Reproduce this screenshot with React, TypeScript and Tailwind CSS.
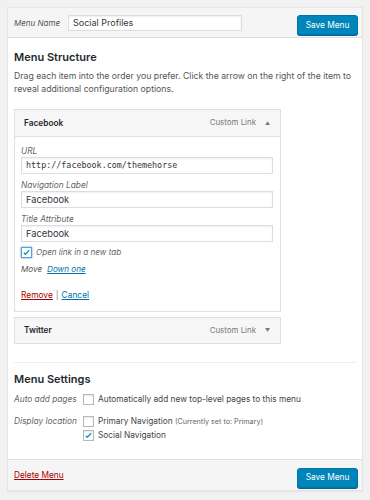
import React from "react";

const font = { fontFamily: "Inter, 'Noto Sans', sans-serif" };

function Check({ checked, focus }: { checked?: boolean; focus?: boolean }) {
  return (
    <span
      className={`inline-flex h-[11px] w-[11px] shrink-0 items-center justify-center border bg-white ${
        focus ? "border-[#5b9dd9] shadow-[0_0_2px_rgba(30,140,190,0.8)]" : "border-[#b4b9be] shadow-[inset_0_1px_2px_rgba(0,0,0,0.1)]"
      }`}
    >
      {checked && (
        <svg viewBox="0 0 20 20" className="h-[9px] w-[9px]">
          <path d="M4 10.5l3.5 3.5L16 5" fill="none" stroke="#1e8cbe" strokeWidth="2.8" />
        </svg>
      )}
    </span>
  );
}

function SaveButton() {
  return (
    <button className="h-[20px] w-[61px] rounded-[3px] border border-[#0073aa] bg-[#0085ba] text-[8.3px] text-white shadow-[0_1px_0_#006799]">
      Save Menu
    </button>
  );
}

function Field({ label, value, mono }: { label: string; value: string; mono?: boolean }) {
  return (
    <div className="flex flex-col">
      <div className="h-[12px] text-[8.3px] italic leading-[12px] text-[#666]">{label}</div>
      <div
        className={`flex h-[17px] items-center border border-[#ddd] bg-white px-[4px] text-[#32373c] shadow-[inset_0_1px_2px_rgba(0,0,0,0.07)] ${
          mono ? "text-[8.4px]" : "text-[9.3px]"
        }`}
        style={mono ? { fontFamily: "'DejaVu Sans Mono', monospace" } : undefined}
      >
        {value}
      </div>
    </div>
  );
}

function ItemHead({ title, up }: { title: string; up?: boolean }) {
  return (
    <>
      <span className="text-[8.3px] font-semibold text-[#23282d]">{title}</span>
      <span className="ml-auto text-[7.9px] text-[#72777c]">Custom Link</span>
      <span className="ml-[9px] w-[6px] text-[5px] leading-none text-[#72777c]">{up ? "▲" : "▼"}</span>
    </>
  );
}

export default function App() {
  return (
    <div className="min-h-[500px] w-[370px] bg-[#f1f1f1] px-[7px] pt-[7px]" style={font}>
      <div className="border border-[#e5e5e5] bg-white shadow-[0_1px_1px_rgba(0,0,0,0.04)]">
        {/* header */}
        <div className="flex h-[30px] items-center border-b border-[#dfdfdf] bg-[#f5f5f5] pl-[6px] pr-[4px]">
          <span className="w-[46px] whitespace-nowrap text-[8px] italic text-[#555]">Menu Name</span>
          <div className="ml-[8px] flex h-[16px] w-[174px] items-center border border-[#ddd] bg-white px-[4px] text-[9px] text-[#32373c] shadow-[inset_0_1px_2px_rgba(0,0,0,0.07)]">
            Social Profiles
          </div>
          <div className="ml-auto">
            <SaveButton />
          </div>
        </div>

        {/* body */}
        <div className="px-[6px] pt-[12px]">
          <h3 className="text-[11px] font-semibold leading-[14px] text-[#23282d]">Menu Structure</h3>
          <p className="mt-[6px] text-[8.7px] leading-[13px] text-[#555]">
            Drag each item into the order you prefer. Click the arrow on the right of the item to reveal additional configuration options.
          </p>

          {/* Facebook item */}
          <div className="mt-[13px] w-[267px] border border-[#dfdfdf] bg-white">
            <div className="flex h-[27px] items-center border-b border-[#dfdfdf] bg-[#f7f7f7] pl-[9px] pr-[9px]">
              <ItemHead title="Facebook" up />
            </div>
            <div className="pl-[6px] pr-[7px] pt-[8px] pb-[10px]">
              <div className="flex flex-col gap-[5px]">
                <Field label="URL" value="http://facebook.com/themehorse" mono />
                <Field label="Navigation Label" value="Facebook" />
                <Field label="Title Attribute" value="Facebook" />
              </div>
              <div className="mt-[4px] flex h-[12px] items-center gap-[4px]">
                <Check checked focus />
                <span className="text-[8.1px] italic text-[#666]">Open link in a new tab</span>
              </div>
              <div className="mt-[5px] flex h-[12px] items-center gap-[5px] text-[8.1px]">
                <span className="italic text-[#555]">Move</span>
                <span className="italic text-[#0073aa] underline">Down one</span>
              </div>
              <div className="mt-[14px] flex h-[12px] items-center text-[8.4px] text-[#555]">
                <span className="text-[#a00] underline">Remove</span>
                <span className="mx-[3px] text-[#82878c]">|</span>
                <span className="text-[#0073aa] underline">Cancel</span>
              </div>
            </div>
          </div>

          {/* Twitter item */}
          <div className="mt-[5px] flex h-[27px] w-[267px] items-center border border-[#dfdfdf] bg-[#f7f7f7] pl-[9px] pr-[9px]">
            <ItemHead title="Twitter" />
          </div>

          <div className="mt-[18px] border-t border-[#eeeeee]" />

          <h3 className="mt-[9px] text-[11px] font-semibold leading-[14px] text-[#23282d]">Menu Settings</h3>

          <div className="mt-[7px] grid grid-cols-[69px_1fr] gap-y-[9px] text-[8.3px]">
            <span className="flex h-[13px] items-center italic text-[#666]">Auto add pages</span>
            <div className="flex h-[13px] items-center gap-[4px]">
              <Check />
              <span className="text-[#444]">Automatically add new top-level pages to this menu</span>
            </div>
            <span className="flex h-[13px] items-center italic text-[#666]">Display location</span>
            <div className="flex flex-col gap-[1px]">
              <div className="flex h-[13px] items-center gap-[4px]">
                <Check />
                <span className="text-[#444]">
                  Primary Navigation <span className="text-[7.2px] text-[#666]">(Currently set to: Primary)</span>
                </span>
              </div>
              <div className="flex h-[13px] items-center gap-[4px]">
                <Check checked />
                <span className="text-[#444]">Social Navigation</span>
              </div>
            </div>
          </div>
          <div className="h-[17px]" />
        </div>

        {/* footer */}
        <div className="flex h-[31px] items-center border-t border-[#dfdfdf] bg-[#f5f5f5] pl-[6px] pr-[4px]">
          <span className="text-[8.3px] text-[#a00] underline">Delete Menu</span>
          <div className="ml-auto">
            <SaveButton />
          </div>
        </div>
      </div>
    </div>
  );
}
